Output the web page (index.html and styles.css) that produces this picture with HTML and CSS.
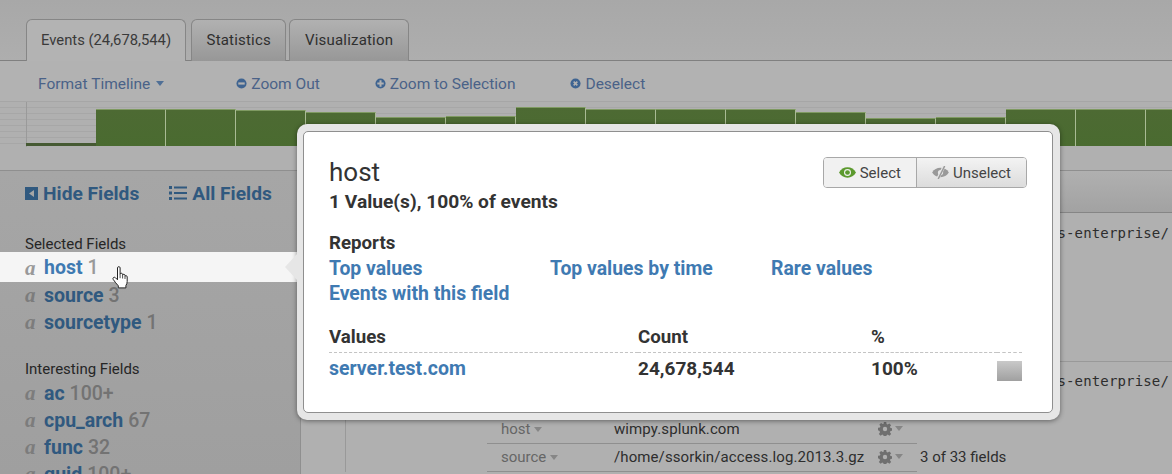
FILE: index.html
```html
<!DOCTYPE html>
<html lang="en">
<head>
  <meta charset="UTF-8" />
  <title>Search - Events</title>
  <link rel="stylesheet" href="styles.css">
</head>
<body>
  <svg class="sprites" width="0" height="0">
    <symbol id="gear" viewBox="0 0 16 16">
      <path d="M6.600 0h2.800l.4 2.200 1.300.6 1.900-1.200 2 2-1.300 1.800.6 1.400 2.200.4v2.800l-2.200.4-.6 1.400 1.300 1.800-2 2-1.900-1.200-1.300.6-.4 2.200H6.600l-.4-2.200-1.300-.6-1.900 1.200-2-2 1.300-1.800-.6-1.400L0 9.400V6.600l2.200-.4.6-1.400L1.500 3l2-2 1.900 1.200 1.300-.6zM8 5.500a2.500 2.500 0 1 0 0 5 2.500 2.500 0 0 0 0-5z" fill-rule="evenodd"/>
    </symbol>
  </svg>

  <div class="tabs-bar">
    <div class="tab active">Events (24,678,544)</div>
    <div class="tab">Statistics</div>
    <div class="tab">Visualization</div>
  </div>

  <div class="tl-toolbar">
    <span class="tl-link format">Format Timeline <i class="caret blue"></i></span>
    <span class="tl-link zoom-out">
      <svg class="tl-icon" viewBox="0 0 12 12"><circle cx="6" cy="6" r="5.500"/><rect x="2.500" y="4.800" width="7" height="2.400" fill="#b2b2b2"/></svg>
      Zoom Out
    </span>
    <span class="tl-link zoom-in">
      <svg class="tl-icon" viewBox="0 0 12 12"><circle cx="6" cy="6" r="5.500"/><path d="M4.900 2.500h2.200v2.400h2.400v2.200H7.100v2.400H4.900V7.100H2.500V4.900h2.400z" fill="#b2b2b2"/></svg>
      Zoom to Selection
    </span>
    <span class="tl-link deselect">
      <svg class="tl-icon" viewBox="0 0 12 12"><circle cx="6" cy="6" r="5.500"/><path d="M4 4l4 4M8 4l-4 4" stroke="#b2b2b2" stroke-width="1.800"/></svg>
      Deselect
    </span>
  </div>

  <div class="timeline">
    <div class="bar tiny" style="height:3px"></div>
    <div class="bar" style="height:37px"></div>
    <div class="bar" style="height:37px"></div>
    <div class="bar" style="height:36px"></div>
    <div class="bar" style="height:34px"></div>
    <div class="bar" style="height:29px"></div>
    <div class="bar" style="height:30px"></div>
    <div class="bar" style="height:39px"></div>
    <div class="bar" style="height:37px"></div>
    <div class="bar" style="height:37px"></div>
    <div class="bar" style="height:37px"></div>
    <div class="bar" style="height:34px"></div>
    <div class="bar" style="height:28px"></div>
    <div class="bar" style="height:29px"></div>
    <div class="bar" style="height:37px"></div>
    <div class="bar" style="height:37px"></div>
    <div class="bar" style="height:37px"></div>
  </div>

  <div class="content">
    <aside class="sidebar">
      <div class="side-actions">
        <span class="side-action hide">
          <svg class="hide-icon" viewBox="0 0 13 13"><path d="M0 0h13v13H0zM9 3L4 6.500 9 10z" fill-rule="evenodd"/></svg>
          Hide Fields
        </span>
        <span class="side-action">
          <svg class="list-icon" viewBox="0 0 18 14"><path d="M0 0h3v3H0zM0 5.500h3v3H0zM0 11h3v3H0zM5 .500h13v2H5zM5 6h13v2H5zM5 11.500h13v2H5z"/></svg>
          All Fields
        </span>
      </div>

      <div class="group-title">Selected Fields</div>
      <div class="field current"><i>a</i><b>host</b> <span>1</span></div>
      <div class="field"><i>a</i><b>source</b> <span>3</span></div>
      <div class="field"><i>a</i><b>sourcetype</b> <span>1</span></div>

      <div class="group-title second">Interesting Fields</div>
      <div class="field"><i>a</i><b>ac</b> <span>100+</span></div>
      <div class="field"><i>a</i><b>cpu_arch</b> <span>67</span></div>
      <div class="field"><i>a</i><b>func</b> <span>32</span></div>
      <div class="field"><i>a</i><b>guid</b> <span>100+</span></div>
    </aside>

    <main class="results">
      <div class="results-head"></div>
      <div class="event first">
        <div class="raw">/opt/splunk/apps-enterprise/</div>
      </div>
      <div class="event">
        <div class="raw">/opt/splunk/apps-enterprise/</div>
        <div class="kv-list">
          <div class="kv">
            <span class="kv-name">host <i class="caret"></i></span>
            <span class="kv-value">wimpy.splunk.com</span>
            <span class="kv-gear"><svg class="gear"><use href="#gear"/></svg><i class="caret"></i></span>
            <span class="kv-note"></span>
          </div>
          <div class="kv">
            <span class="kv-name">source <i class="caret"></i></span>
            <span class="kv-value">/home/ssorkin/access.log.2013.3.gz</span>
            <span class="kv-gear"><svg class="gear"><use href="#gear"/></svg><i class="caret"></i></span>
            <span class="kv-note">3 of 33 fields</span>
          </div>
        </div>
      </div>
    </main>
  </div>

  <!-- field popup, sits over the page -->
  <div class="popup">
    <div class="popup-arrow"></div>
    <div class="popup-inner">
      <div class="popup-head">
        <div>
          <h2>host</h2>
          <div class="summary">1 Value(s), 100% of events</div>
        </div>
        <div class="btn-group">
          <span class="btn on">
            <svg class="eye" viewBox="0 0 18 12"><path d="M0 6c2-3.600 5.200-5.500 9-5.500S16 2.400 18 6c-2 3.600-5.200 5.500-9 5.500S2 9.600 0 6z" fill="#5c9a2e"/><circle cx="9" cy="6" r="3.700" fill="#f1f1f1"/><circle cx="9" cy="6" r="2.500" fill="#5c9a2e"/></svg>
            Select
          </span>
          <span class="btn">
            <svg class="eye" viewBox="0 0 18 14"><path d="M0 7c2-3.400 5.200-5 9-5s7 1.600 9 5c-2 3.400-5.200 5-9 5S2 10.400 0 7z" fill="#999"/><circle cx="9" cy="7" r="2.800" fill="#e6e6e6"/><path d="M6 14L13 0" stroke="#e6e6e6" stroke-width="3.200"/><path d="M6.500 14L13.500 0" stroke="#999" stroke-width="1.600"/></svg>
            Unselect
          </span>
        </div>
      </div>

      <div class="reports-title">Reports</div>
      <div class="reports">
        <a>Top values</a>
        <a>Top values by time</a>
        <a>Rare values</a>
        <a>Events with this field</a>
      </div>

      <table class="values">
        <thead>
          <tr><th>Values</th><th>Count</th><th>%</th><th></th></tr>
        </thead>
        <tbody>
          <tr>
            <td><a>server.test.com</a></td>
            <td>24,678,544</td>
            <td>100%</td>
            <td><div class="swatch"></div></td>
          </tr>
        </tbody>
      </table>
    </div>
  </div>

  <svg class="hand" viewBox="0 0 17 23">
    <path d="M5.500 1.800c0-1.500 2.600-1.500 2.600 0v6.400c.2-1.300 2.400-1.300 2.500.2v.7c.3-1.200 2.300-1.100 2.400.3v.8c.4-.9 2.200-.7 2.200.7v4.600c0 1.700-.6 2.800-1.300 4v2.400H6.300v-2.100C4.500 18 2.900 15.800 1.200 13.400c-1-1.500 1-2.900 2.200-1.700l2.100 2.100z" fill="#fff" stroke="#222" stroke-width="1" stroke-linejoin="round"/>
    <path d="M8.100 8.200v4M10.600 9v3.500M13 10v3" stroke="#222" stroke-width=".8" fill="none"/>
  </svg>
</body>
</html>
```

FILE: styles.css
```css
* {
  box-sizing: border-box;
}
html, body {
  height: 474px;
  overflow: hidden;
}
body {
  margin: 0;
  position: relative;
  font-family: Roboto, Arial, sans-serif;
  font-size: 15px;
  color: #333;
  background: #adadad;
}
.sprites {
  position: absolute;
}
i.caret {
  display: inline-block;
  width: 0;
  height: 0;
  border-left: 4px solid transparent;
  border-right: 4px solid transparent;
  border-top: 5px solid #868686;
  vertical-align: 2px;
}
i.caret.blue {
  border-top-color: #4f6f96;
  margin-left: 2px;
}

/* tabs */
.tabs-bar {
  height: 61px;
  padding: 19px 0 0 26px;
  display: flex;
  gap: 3px;
  background: linear-gradient(#a8a8a8, #aeaeae);
  border-bottom: 1px solid #808080;
}
.tab {
  height: 42px;
  padding: 0 14.500px;
  line-height: 40px;
  font-size: 15px;
  letter-spacing: .2px;
  color: #2f2f2f;
  border: 1px solid #868686;
  border-bottom: 0;
  border-radius: 6px 6px 0 0;
  background: linear-gradient(#b1b1b1, #a2a2a2 60%, #979797);
}
.tab.active {
  font-size: 14.800px;
  letter-spacing: 0;
  padding: 0 14px;
  margin-right: 2px;
  background: #b3b3b3;
  color: #3a3a3a;
}

/* timeline toolbar */
.tl-toolbar {
  height: 41px;
  padding-top: 5px;
  display: flex;
  align-items: center;
  font-size: 15.500px;
  background: #b2b2b2;
  color: #4a6288;
  border-bottom: 1px solid #a6a6a6;
}
.tl-link {
  display: flex;
  align-items: center;
  gap: 4px;
  white-space: nowrap;
}
.format {
  margin-left: 38px;
}
.zoom-out {
  margin-left: 72px;
}
.zoom-in {
  margin-left: 55px;
}
.deselect {
  margin-left: 55px;
}
.tl-icon {
  width: 11px;
  height: 11px;
  fill: #3f6491;
}

/* timeline chart */
.timeline {
  height: 45px;
  padding-left: 26px;
  display: flex;
  align-items: flex-end;
  padding-bottom: 1px;
  background:
    linear-gradient(#9a9a9a, #9a9a9a) 26px 0 / 1px 100% no-repeat,
    repeating-linear-gradient(#b0b0b0 0, #b0b0b0 5px, #a7a7a7 5px, #a7a7a7 6px);
}
.bar {
  flex: 0 0 70px;
  background: linear-gradient(#4d6a33, #4a6b30);
  border-top: 1px solid #7f9a62;
  border-right: 1px solid #a9bb94;
}
.bar.tiny {
  background: #465a33;
  border-top: 0;
  border-right: 0;
}

/* page below the timeline */
.content {
  display: flex;
  height: 327px;
  padding-top: 23px;
  background: #b0b0b0;
}
.sidebar {
  flex: 0 0 300px;
  padding-top: 10px;
  border-top: 1px solid #8f8f8f;
  background: linear-gradient(#a6a6a6, #9f9f9f);
}
.side-actions {
  display: flex;
  gap: 30px;
  padding-left: 25px;
  height: 24px;
  align-items: center;
  font-size: 19.200px;
  font-weight: 700;
  color: #30597f;
}
.side-action {
  display: flex;
  align-items: center;
  gap: 5px;
}
.hide-icon {
  width: 13px;
  height: 13px;
  fill: #30597f;
}
.list-icon {
  width: 18px;
  height: 14px;
  fill: #30597f;
}
.group-title {
  margin: 31px 0 0 25px;
  font-size: 15px;
  line-height: 16px;
  color: #262626;
}
.group-title.second {
  margin-top: 25px;
  margin-bottom: 3px;
}
.field {
  height: 27px;
  line-height: 27px;
  padding-left: 25px;
  font-size: 19.500px;
  font-weight: 700;
  white-space: nowrap;
  display: flex;
  gap: 5px;
}
.field i {
  width: 14px;
  font-family: "Liberation Serif", serif;
  font-size: 21px;
  font-weight: 700;
  color: #7c7c7c;
}
.field b {
  color: #30597f;
  font-weight: 700;
}
.field span {
  color: #737373;
  font-weight: 500;
}
.field.current {
  height: 30px;
  line-height: 32px;
  width: 297px;
  background: #f5f5f5;
}
.field.current i,
.field.current span {
  color: #999;
}
.field.current b {
  color: #3f7ab2;
}

.results {
  flex: 1;
  border-left: 1px solid #8f8f8f;
  border-top: 1px solid #8f8f8f;
  min-width: 0;
}
.results-head {
  height: 42px;
  background: linear-gradient(#b0b0b0, #a2a2a2);
  border-bottom: 1px solid #858585;
}
.event {
  margin-left: 44px;
  border-left: 1px solid #999;
}
.event.first {
  height: 149px;
  border-bottom: 1px solid #999;
}
.raw {
  padding: 11px 3px 0 0;
  text-align: right;
  white-space: nowrap;
  font-family: "DejaVu Sans Mono", monospace;
  font-size: 14px;
  letter-spacing: .15px;
  line-height: 17px;
  color: #2d2d2d;
}
.event.first .raw {
  padding-top: 12px;
}
.kv-list {
  margin: 26px 0 0 141px;
  width: 430px;
}
.kv {
  height: 28px;
  padding-bottom: 2px;
  display: flex;
  align-items: center;
  border-bottom: 1px solid #8f8f8f;
  white-space: nowrap;
}
.kv-name {
  flex: 0 0 127px;
  padding-left: 14px;
  color: #666;
}
.kv-value {
  flex: 0 0 264px;
  letter-spacing: .1px;
  color: #2d2d2d;
}
.kv-gear {
  display: flex;
  align-items: center;
  gap: 3px;
}
.kv-note {
  margin-left: 17px;
  color: #2d2d2d;
}
.gear {
  width: 14px;
  height: 14px;
  fill: #6f6f6f;
}

/* popup */
.popup {
  position: absolute;
  left: 297px;
  top: 124px;
  width: 763px;
  height: 296px;
  padding: 7px 7px 7px 6px;
  background: #e6e6e6;
  border-radius: 10px;
  box-shadow: 0 1px 5px rgba(0, 0, 0, .45);
}
.popup-arrow {
  position: absolute;
  left: -12px;
  top: 130px;
  width: 0;
  height: 0;
  border-top: 13px solid transparent;
  border-bottom: 13px solid transparent;
  border-right: 12px solid #e6e6e6;
}
.popup-inner {
  height: 100%;
  padding: 24px 25px 0 25px;
  background: #fff;
  border: 1px solid #8f8f8f;
  border-radius: 5px;
}
.popup-head {
  display: flex;
  justify-content: space-between;
  align-items: flex-start;
}
.popup h2 {
  margin: 0;
  font-size: 26px;
  font-weight: 400;
  line-height: 32px;
  color: #333;
}
.summary {
  margin-top: 1px;
  font-size: 19.200px;
  font-weight: 700;
  line-height: 26px;
  color: #333;
}
.btn-group {
  display: flex;
  height: 31px;
  margin-top: 1px;
  border: 1px solid #a8a8a8;
  border-radius: 4px;
}
.btn {
  display: flex;
  align-items: center;
  gap: 4px;
  padding: 0 15px;
  font-size: 15px;
  color: #444;
  background: linear-gradient(#f3f3f3, #dcdcdc);
  border-radius: 0 3px 3px 0;
}
.btn.on {
  background: #f1f1f1;
  border-right: 1px solid #a8a8a8;
  border-radius: 3px 0 0 3px;
}
.eye {
  width: 17px;
  height: 13px;
}
.reports-title {
  margin-top: 16px;
  font-size: 18.700px;
  font-weight: 700;
  line-height: 24px;
  color: #333;
}
.reports {
  margin-top: 1px;
  display: grid;
  grid-template-columns: repeat(3, 221px);
  font-size: 19.400px;
  font-weight: 700;
  line-height: 25px;
}
a {
  color: #3f7ab2;
}
.values {
  width: 693px;
  margin-top: 19px;
  border-collapse: collapse;
  font-size: 19px;
}
.values th {
  padding: 0 0 2px;
  height: 27px;
  text-align: left;
  font-size: 18.700px;
  font-weight: 700;
  border-bottom: 1px dashed #c4c4c4;
}
.values td {
  padding: 2px 0 0;
  height: 30px;
  font-weight: 700;
}
.values td a {
  font-size: 19.500px;
  font-weight: 700;
}
.values th:nth-child(1) {
  width: 309px;
}
.values th:nth-child(2) {
  width: 233px;
}
.values th:nth-child(3) {
  width: 126px;
}
.swatch {
  width: 25px;
  height: 20px;
  margin-top: 6px;
  background: linear-gradient(#c9c9c9, #a0a0a0);
}

.hand {
  position: absolute;
  left: 112px;
  top: 266px;
  width: 17px;
  height: 23px;
}
```
